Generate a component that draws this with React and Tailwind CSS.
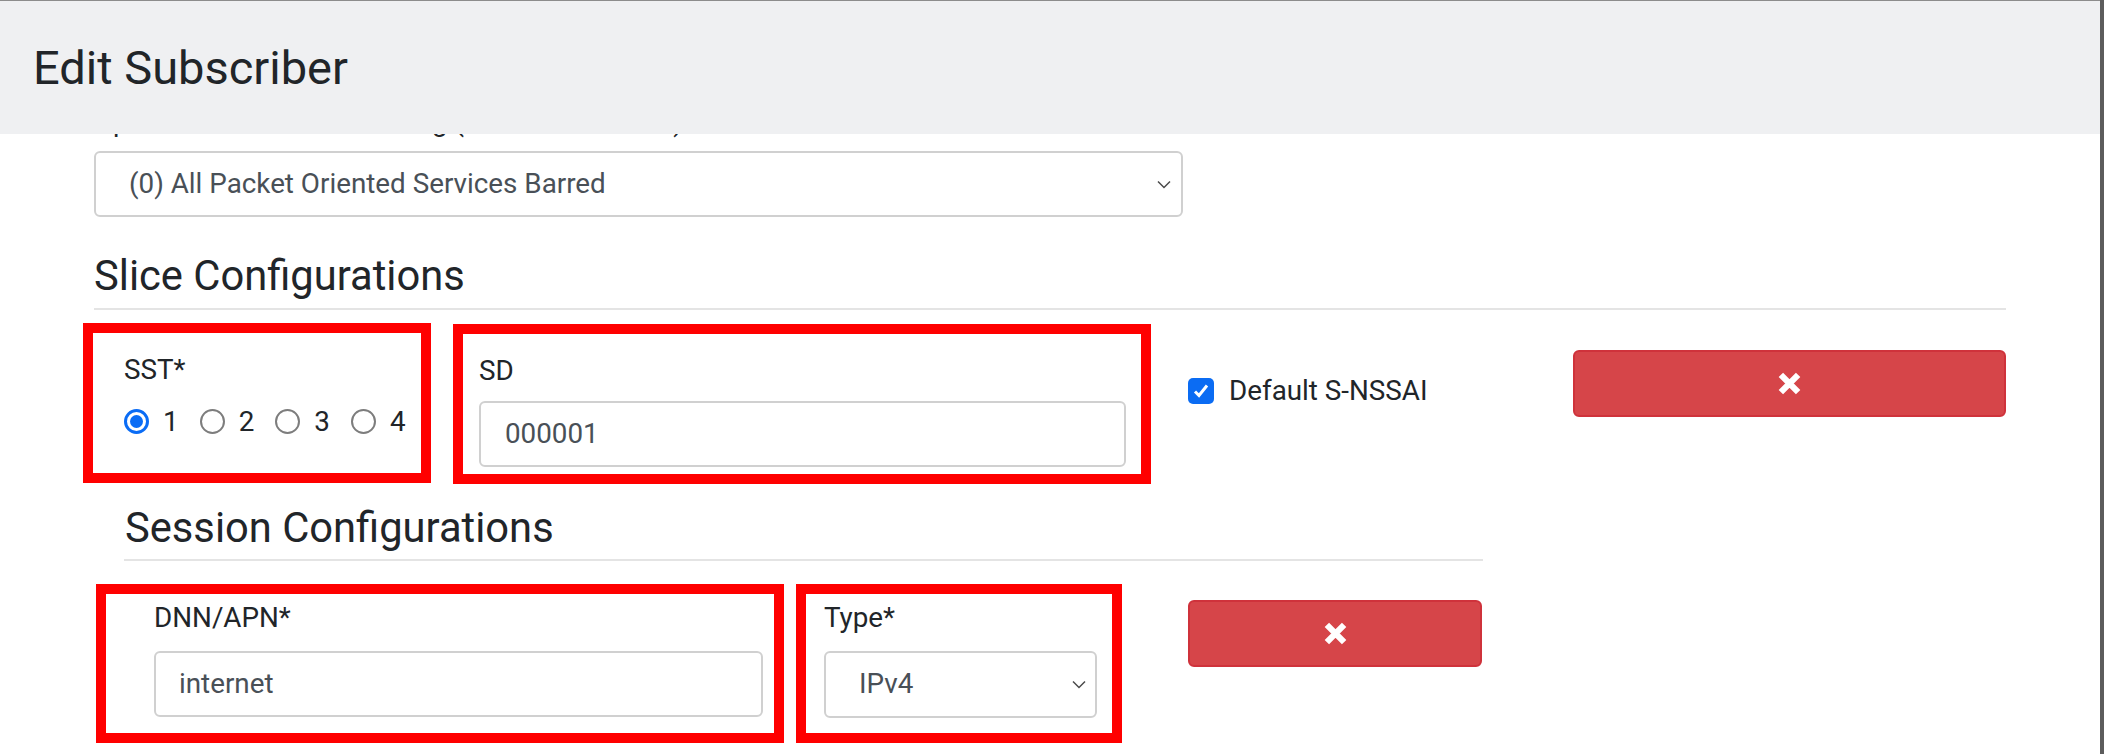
import React from "react";

const XIcon = () => (
  <svg width="23" height="23" viewBox="0 0 24 24">
    <path d="M3 3 L21 21 M21 3 L3 21" stroke="#ffffff" strokeWidth="6.5" fill="none" />
  </svg>
);

const Chevron = () => (
  <svg width="14" height="9" viewBox="0 0 14 9">
    <path d="M1 1.5 L7 7.5 L13 1.5" stroke="#4a4a4a" strokeWidth="1.5" fill="none" />
  </svg>
);

const Radio = ({ checked }) =>
  checked ? (
    <span className="w-[25px] h-[25px] rounded-full border-[3px] border-[#0a6cf5] flex items-center justify-center">
      <span className="block w-[13px] h-[13px] rounded-full bg-[#0a6cf5]" />
    </span>
  ) : (
    <span className="block w-[25px] h-[25px] rounded-full border-2 border-[#7d7d7d]" />
  );

const DeleteButton = ({ className }) => (
  <button className={`h-[67px] bg-[#d64549] border-2 border-[#cf323b] rounded-[6px] flex items-center justify-center ${className}`}>
    <XIcon />
  </button>
);

export default function App() {
  return (
    <div className="w-[2104px] h-[754px] overflow-hidden bg-white flex font-[Roboto,'Liberation_Sans',sans-serif] text-[#212529]">
      <div className="flex-1 flex flex-col">
        {/* Header */}
        <header className="h-[134px] shrink-0 border-t border-[#8c8c8c] bg-[#eff0f2] flex items-center pl-[33px]">
          <h1 className="text-[47px] leading-[56px] font-normal">Edit Subscriber</h1>
        </header>

        {/* Body */}
        <div className="flex-1 overflow-hidden pl-[94px]">
          <label className="-mt-[33px] mb-[9px] block text-[27.8px] leading-[41px] whitespace-nowrap">
            Operator Determined Barring (TS 29.272 7.3.30)
          </label>
          <div className="w-[1089px] h-[66px] border-2 border-[#d0d0d0] rounded-[6px] flex items-center justify-between pl-[33px] pr-[10px] text-[27.8px] text-[#495057]">
            <span>(0) All Packet Oriented Services Barred</span>
            <Chevron />
          </div>

          <h4 className="mt-[34px] text-[41.7px] leading-[50px] font-normal">Slice Configurations</h4>
          <div className="mt-[7px] h-[2px] w-[1912px] bg-[#e4e4e4]" />

          <div className="mt-[13px] -ml-[11px] w-[1923px] flex items-start text-[27.8px] leading-[41.7px]">
            <div className="w-[348px] h-[160px] border-[10px] border-[#ff0000] pl-[31px] pt-[16px]">
              <div className="mb-[10px]">SST*</div>
              <div className="flex items-center">
                {[1, 2, 3, 4].map((n) => (
                  <div key={n} className="flex items-center mr-[21px]">
                    <span className="mr-[14px]">
                      <Radio checked={n === 1} />
                    </span>
                    <span>{n}</span>
                  </div>
                ))}
              </div>
            </div>

            <div className="ml-[22px] mt-[1px] w-[698px] h-[160px] border-[10px] border-[#ff0000] pl-[16px] pt-[16px]">
              <div className="mb-[9px]">SD</div>
              <div className="w-[647px] h-[66px] border-2 border-[#d0d0d0] rounded-[6px] flex items-center pl-[24px] text-[#495057]">
                000001
              </div>
            </div>

            <div className="ml-[37px] mt-[47px] flex items-center">
              <span className="w-[26px] h-[26px] rounded-[5px] bg-[#0b6cf3] flex items-center justify-center">
                <svg width="20" height="20" viewBox="0 0 20 20">
                  <path d="M4 10.5 L8 14.5 L16 4.5" stroke="#ffffff" strokeWidth="3" fill="none" />
                </svg>
              </span>
              <span className="ml-[15px]">Default S-NSSAI</span>
            </div>

            <DeleteButton className="ml-auto mt-[27px] w-[433px]" />
          </div>

          <h4 className="mt-[19px] ml-[31px] text-[41.7px] leading-[50px] font-normal">Session Configurations</h4>
          <div className="mt-[6px] ml-[30px] h-[2px] w-[1359px] bg-[#e4e4e4]" />

          <div className="mt-[23px] ml-[2px] flex items-start text-[27.8px] leading-[41.7px]">
            <div className="w-[688px] h-[159px] border-[10px] border-[#ff0000] pl-[48px] pt-[3px]">
              <div className="mb-[12px]">DNN/APN*</div>
              <div className="w-[609px] h-[66px] border-2 border-[#d0d0d0] rounded-[6px] flex items-center pl-[23px] text-[#495057]">
                internet
              </div>
            </div>

            <div className="ml-[12px] w-[326px] h-[159px] border-[10px] border-[#ff0000] pl-[18px] pt-[3px]">
              <div className="mb-[12px]">Type*</div>
              <div className="w-[273px] h-[67px] border-2 border-[#d0d0d0] rounded-[6px] flex items-center justify-between pl-[33px] pr-[9px] text-[#495057]">
                <span>IPv4</span>
                <Chevron />
              </div>
            </div>

            <DeleteButton className="ml-[66px] mt-[16px] w-[294px]" />
          </div>
        </div>
      </div>
      <div className="w-[4px] shrink-0 bg-[#5c5c5c]" />
    </div>
  );
}
